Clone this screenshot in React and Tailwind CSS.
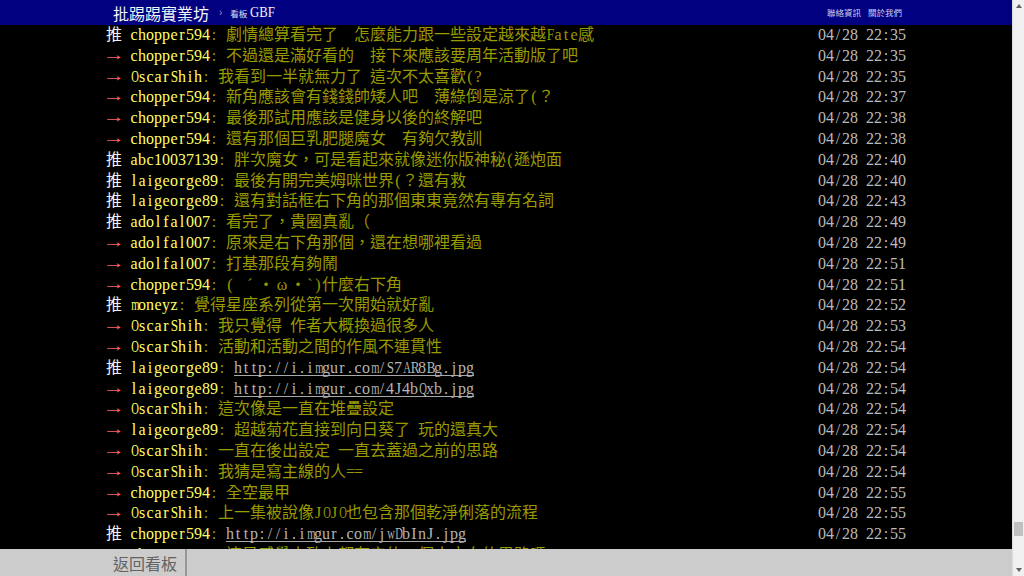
import React from "react";

const rows = [
  ["推", "chopper594", "劇情總算看完了  怎麼能力跟一些設定越來越Fate感", "04/28 22:35"],
  ["→", "chopper594", "不過還是滿好看的  接下來應該要周年活動版了吧", "04/28 22:35"],
  ["→", "OscarShih", "我看到一半就無力了 這次不太喜歡(?", "04/28 22:35"],
  ["→", "chopper594", "新角應該會有錢錢帥矮人吧  薄綠倒是涼了(？", "04/28 22:37"],
  ["→", "chopper594", "最後那試用應該是健身以後的終解吧", "04/28 22:38"],
  ["→", "chopper594", "還有那個巨乳肥腿魔女  有夠欠教訓", "04/28 22:38"],
  ["推", "abc10037139", "胖次魔女，可是看起來就像迷你版神秘(遜炮面", "04/28 22:40"],
  ["推", "laigeorge89", "最後有開完美姆咪世界(？還有救", "04/28 22:40"],
  ["推", "laigeorge89", "還有對話框右下角的那個東東竟然有專有名詞", "04/28 22:43"],
  ["推", "adolfal007", "看完了，貴圈真亂（", "04/28 22:49"],
  ["→", "adolfal007", "原來是右下角那個，還在想哪裡看過", "04/28 22:49"],
  ["→", "adolfal007", "打基那段有夠鬧", "04/28 22:51"],
  ["→", "chopper594", "( ´・ω・`)什麼右下角", "04/28 22:51"],
  ["推", "moneyz", "覺得星座系列從第一次開始就好亂", "04/28 22:52"],
  ["→", "OscarShih", "我只覺得 作者大概換過很多人", "04/28 22:53"],
  ["→", "OscarShih", "活動和活動之間的作風不連貫性", "04/28 22:54"],
  ["推", "laigeorge89", "http://i.imgur.com/S7AR8Bg.jpg", "04/28 22:54"],
  ["→", "laigeorge89", "http://i.imgur.com/4J4bQxb.jpg", "04/28 22:54"],
  ["→", "OscarShih", "這次像是一直在堆疊設定", "04/28 22:54"],
  ["→", "laigeorge89", "超越菊花直接到向日葵了 玩的還真大", "04/28 22:54"],
  ["→", "OscarShih", "一直在後出設定 一直去蓋過之前的思路", "04/28 22:54"],
  ["→", "OscarShih", "我猜是寫主線的人==", "04/28 22:54"],
  ["→", "chopper594", "全空最甲", "04/28 22:55"],
  ["→", "OscarShih", "上一集被說像JOJO也包含那個乾淨俐落的流程", "04/28 22:55"],
  ["推", "chopper594", "http://i.imgur.com/jwDbInJ.jpg", "04/28 22:55"],
  ["→", "chopper594", "這是感覺大致上都有它的一個大方向的思路嗎", "04/28 22:56"],
];

const WIDE = "mwMWADGHKNOQUVXY";
const MID = "BCRETZLFPS";

function Chars({ s }) {
  return Array.from(s).map((ch, i) => {
    const code = ch.charCodeAt(0);
    if (code < 128) {
      let cls = "w-[8px] shrink-0 text-center";
      if (WIDE.includes(ch)) cls = "w-[8px] shrink-0 text-center scale-x-[0.66]";
      else if (MID.includes(ch)) cls = "w-[8px] shrink-0 text-center scale-x-[0.82]";
      return (
        <span key={i} className={cls}>
          {ch === " " ? "\u00a0" : ch}
        </span>
      );
    }
    return (
      <span key={i} className="w-[16px] shrink-0 text-center">
        {ch}
      </span>
    );
  });
}

function Row({ tag, user, content, date }) {
  const isLink = content.startsWith("http");
  return (
    <div className="flex h-[20.8px] leading-[20.8px] whitespace-nowrap">
      {tag === "推" ? (
        <span className="flex w-[24px] shrink-0 text-[#f2f2f2]">
          <span className="w-[16px] text-center">推</span>
        </span>
      ) : (
        <span className="flex w-[24px] shrink-0 text-[#ff6666]">
          <span className="w-[16px] origin-center -translate-y-[1px] scale-x-[1.4] text-center">→</span>
        </span>
      )}
      <span className="flex text-[#ffff66]">
        <Chars s={user} />
      </span>
      <span className="flex text-[#999900]">
        <Chars s=": " />
      </span>
      {isLink ? (
        <span className="flex h-[18px] border-b border-[#a8a8a8] text-[#b4b4b4]">
          <Chars s={content} />
        </span>
      ) : (
        <span className="flex text-[#999900]">
          <Chars s={content} />
        </span>
      )}
      <span className="ml-auto flex text-[#bbbbbb]">
        <Chars s={date} />
      </span>
    </div>
  );
}

export default function App() {
  return (
    <div className="flex h-[576px] w-[1024px] overflow-hidden bg-black">
      <div className="flex min-w-0 flex-1 flex-col">
        <header className="relative z-10 h-[25px] shrink-0 bg-[#000080]">
          <div className="mx-auto flex h-full w-[800px] items-center pl-[7px] pr-[4px]">
            <span className="font-['Noto_Sans_CJK_TC',sans-serif] text-[16px] leading-none text-[#f4f4f4]">
              批踢踢實業坊
            </span>
            <span className="ml-[10px] font-['Liberation_Sans',sans-serif] text-[10px] leading-none text-[#9a9ac8]">
              ›
            </span>
            <span className="ml-[8px] mt-[2px] font-['Noto_Sans_CJK_TC',sans-serif] text-[8.5px] leading-none text-[#e0e0f0]">
              看板
            </span>
            <span className="ml-[3px] font-['Liberation_Serif',serif] text-[15px] leading-none text-[#f4f4f4] scale-x-[0.85] origin-left">
              GBF
            </span>
            <div className="ml-auto flex gap-[7px] font-['Noto_Sans_CJK_TC',sans-serif] text-[8.5px] leading-none text-[#cfcfee]">
              <span>聯絡資訊</span>
              <span>關於我們</span>
            </div>
          </div>
        </header>
        <main className="min-h-0 flex-1 overflow-hidden">
          <div className="mx-auto w-[800px] font-['Liberation_Serif','Noto_Sans_CJK_TC',serif] text-[16px]">
            {rows.map((r, i) => (
              <Row key={i} tag={r[0]} user={r[1]} content={r[2]} date={r[3]} />
            ))}
          </div>
        </main>
        <footer className="h-[27px] shrink-0 bg-[#cccccc]">
          <div className="mx-auto flex h-full w-[800px]">
            <div className="flex h-full items-center border-r-2 border-[#979797] pl-[7px] pr-[8px] font-['Noto_Sans_CJK_TC',sans-serif] text-[16px] leading-none text-[#636363]">
              返回看板
            </div>
          </div>
        </footer>
      </div>
      <div className="flex w-[12px] shrink-0 flex-col border-l border-[#dcdcdc] bg-[#f0f0f0]">
        <div className="flex h-[12px] items-center justify-center">
          <svg width="6" height="4" viewBox="0 0 6 4">
            <polygon points="3,0 6,4 0,4" fill="#606060" />
          </svg>
        </div>
        <div className="flex flex-1 flex-col justify-end px-[1px] pb-[28px]">
          <div className="h-[14px] bg-[#c1c1c1]" />
        </div>
        <div className="flex h-[12px] items-center justify-center">
          <svg width="6" height="4" viewBox="0 0 6 4">
            <polygon points="0,0 6,0 3,4" fill="#606060" />
          </svg>
        </div>
      </div>
    </div>
  );
}
